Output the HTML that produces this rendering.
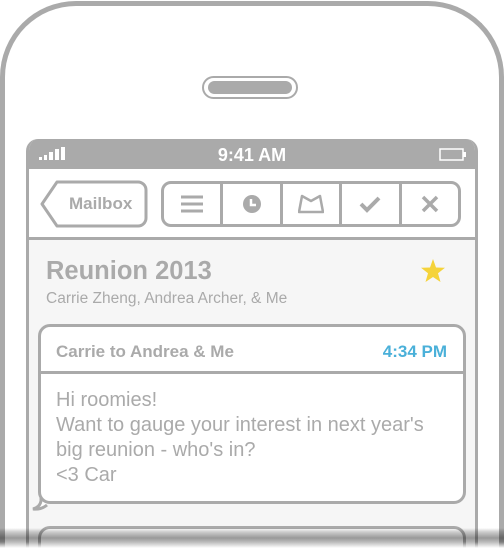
<!DOCTYPE html>
<html style="width:504px;height:560px;overflow:hidden"><head><style>
*{margin:0;padding:0;box-sizing:border-box}
body{width:504px;height:560px;overflow:hidden;background:#fff;font-family:"Liberation Sans",sans-serif;position:relative}
.phone{position:absolute;left:0;top:1px;width:504px;height:559px;border:5px solid #aaa;border-bottom:none;border-radius:76px 76px 0 0;background:#fff}
.spk{position:absolute;left:202px;top:76px;width:96px;height:23px;border:2px solid #aaa;border-radius:12px;background:#fff}
.spk i{position:absolute;left:4px;top:3px;right:4px;bottom:3px;background:#aaa;border-radius:7px}
.screen{position:absolute;left:26px;top:139px;width:452px;height:421px;border:3px solid #aaa;border-top:none;border-bottom:none;border-radius:12px 12px 0 0;background:#f6f6f6;overflow:hidden}
.status{height:30px;background:#aaa;color:#fff;font-weight:bold;font-size:18px;text-align:center;line-height:33px;position:relative}
.nav{height:71px;background:#fff;border-bottom:3px solid #aaa;position:relative}
.seg{position:absolute;left:132px;top:12px;width:300px;height:46px;border:3px solid #aaa;border-radius:10px;display:flex}
.seg div{flex:1;border-left:3px solid #aaa;display:flex;align-items:center;justify-content:center}
.seg div:first-child{border-left:none}
.t{position:absolute;color:#aaa}
.card{position:absolute;left:9px;top:185px;width:428px;height:180px;border:3px solid #aaa;border-radius:12px;background:#fff}
.hd{height:47px;border-bottom:3px solid #aaa;font-weight:bold;font-size:17px;color:#aaa;padding:15px 0 0 15px;position:relative}
.bd{padding:14px 0 0 15px;font-size:20px;line-height:25px;color:#aaa}
.fade{position:absolute;left:0;top:528px;width:504px;height:32px;background:linear-gradient(#fff0 0px,#0003 4px,#0006 10px,#0004 14px,#fff 20px,#fff 32px)}
</style></head><body>
<div class="phone"></div>
<div class="spk"><i></i></div>
<div class="screen">
 <div class="status">9:41 AM
  <svg style="position:absolute;left:9px;top:8px" width="30" height="14"><rect x="1" y="10" width="3" height="3" fill="#fff"/><rect x="6" y="8" width="3" height="5" fill="#fff"/><rect x="11" y="5" width="4" height="8" fill="#fff"/><rect x="17" y="2" width="4" height="11" fill="#fff"/><rect x="23" y="0" width="4" height="13" fill="#fff"/></svg>
  <svg style="position:absolute;right:8px;top:9px" width="28" height="13"><rect x="1" y="1" width="23" height="11" fill="none" stroke="#fff" stroke-width="1.5"/><rect x="24" y="4" width="3" height="5" fill="#fff"/></svg>
 </div>
 <div class="nav">
  <svg style="position:absolute;left:11px;top:11px" width="110" height="48"><path d="M17 2 H98 a8 8 0 0 1 8 8 V38 a8 8 0 0 1 -8 8 H17 L2 24 Z" fill="none" stroke="#aaa" stroke-width="3" stroke-linejoin="round"/></svg>
  <div class="t" style="left:40px;top:25px;font-weight:bold;font-size:17px">Mailbox</div>
  <div class="seg">
   <div><svg width="24" height="20"><path d="M1 3H23M1 10H23M1 17H23" stroke="#aaa" stroke-width="3"/></svg></div>
   <div><svg width="20" height="20"><circle cx="10" cy="10" r="9" fill="#aaa"/><path d="M9 5V11H14" stroke="#fff" stroke-width="2.5" fill="none"/></svg></div>
   <div><svg width="26" height="20"><path d="M4 2 L13 7 L22 2 L25 18 H1 Z" fill="none" stroke="#aaa" stroke-width="2.5" stroke-linejoin="round"/></svg></div>
   <div><svg width="22" height="18"><path d="M2 9 L8 15 L20 3" fill="none" stroke="#aaa" stroke-width="4"/></svg></div>
   <div><svg width="18" height="18"><path d="M2 2L16 16M16 2L2 16" stroke="#aaa" stroke-width="3.5"/></svg></div>
  </div>
 </div>
 <div class="t" style="left:17px;top:118px;font-weight:bold;font-size:25.5px">Reunion 2013</div>
 <div class="t" style="left:17px;top:151px;font-size:15.5px">Carrie Zheng, Andrea Archer, &amp; Me</div>
 <svg style="position:absolute;left:392px;top:120px" width="24" height="23"><path d="M12 0 L15 8.5 L24 8.8 L17 14.3 L19.5 23 L12 18 L4.5 23 L7 14.3 L0 8.8 L9 8.5 Z" fill="#f5d33a"/></svg>
 <svg style="position:absolute;left:2px;top:350px" width="20" height="22"><path d="M10 0 V12 Q9 18 2 20 Q10 21 16 16" fill="#fff" stroke="#aaa" stroke-width="3"/></svg>
 <div class="card">
  <div class="hd">Carrie to Andrea &amp; Me<span style="position:absolute;right:16px;top:15px;color:#4ab0d9">4:34 PM</span></div>
  <div class="bd">Hi roomies!<br>Want to gauge your interest in next year's<br>big reunion - who's in?<br>&lt;3 Car</div>
 </div>
 <div class="card" style="top:387px;height:34px;border-bottom:none;border-radius:12px 12px 0 0"></div>
</div>
<div class="fade"></div>
</body></html>
